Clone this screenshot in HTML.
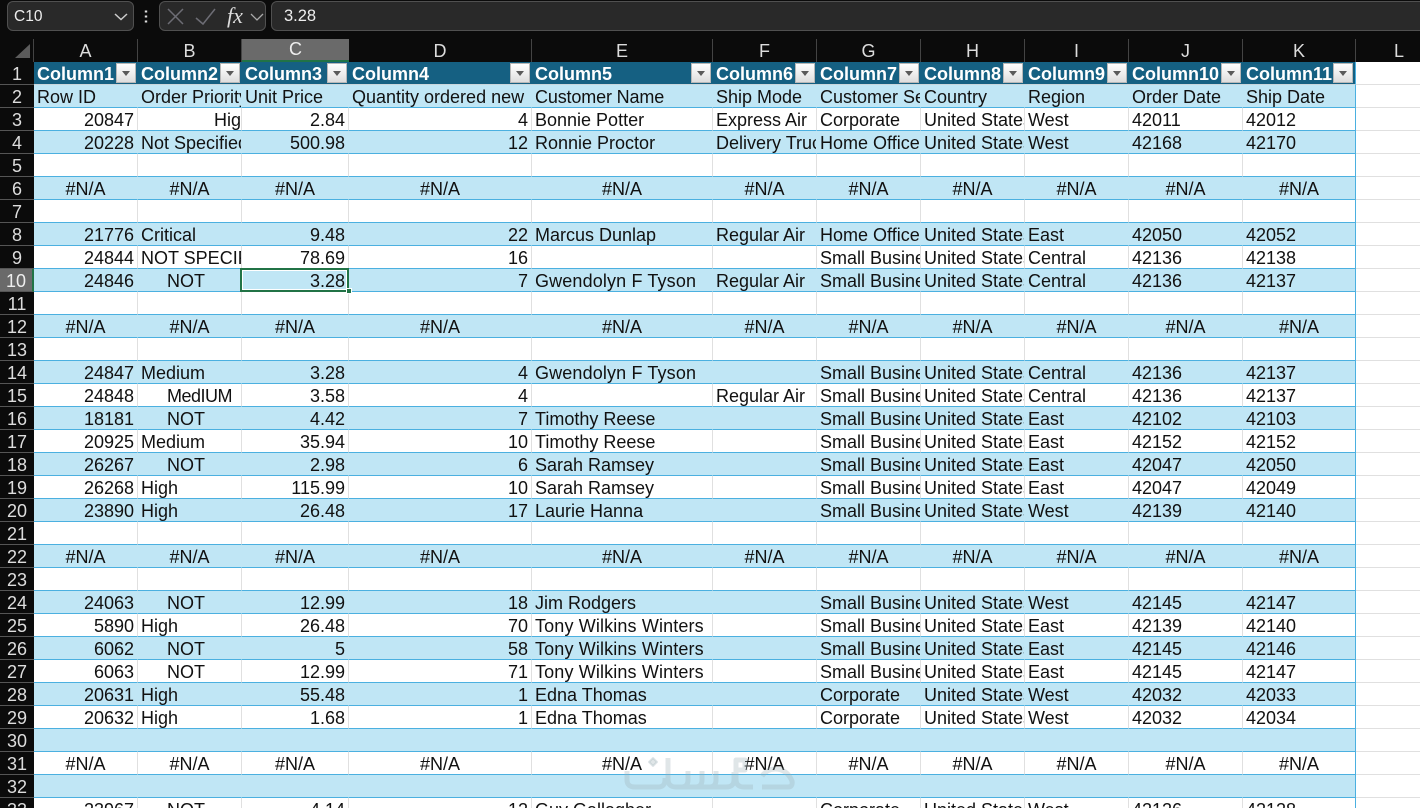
<!DOCTYPE html>
<html><head><meta charset="utf-8"><style>
html,body{margin:0;padding:0;width:1420px;height:808px;overflow:hidden;background:#0b0b0b;font-family:"Liberation Sans",sans-serif}
#wrap{position:relative;width:1420px;height:808px;overflow:hidden}
.box{position:absolute;box-sizing:border-box;background:#292929;border:1px solid #505050;border-radius:6px;color:#eee;font-size:16.5px;line-height:29px}
table{position:absolute;left:0;top:39px;border-collapse:separate;border-spacing:0;table-layout:fixed;width:1442px;font-size:18px;color:#111}
td,th{box-sizing:border-box;height:23px;padding:2px 3px 0 3px;overflow:hidden;white-space:nowrap;font-weight:400;line-height:20px;position:relative}
td{background:#fff;border-right:1px solid #e0e0e0;border-bottom:1px solid #4bb0e0;text-align:left}
tr.b td{background:#c0e6f5;border-right:1px solid #c0e6f5}
td.k{border-right:1px solid #4bb0e0!important}
td.l,tr.b td.l,tr.h td.l{background:#fff;border-right:0;border-bottom:1px solid #e0e0e0}
th{background:#0b0b0b;color:#ddd;text-align:center;padding:2px 0 0;border-bottom:1px solid #555;font-size:18px}
tr.c th{border-right:1px solid #444;border-bottom:0;padding:0;line-height:22px}
tr.c th:last-child{border-right:0}
tr.c th.s{background:#6a6a6a;color:#eee;border-bottom:2px solid #217346;border-right:0;line-height:21px}
th.s{background:#6a6a6a;color:#eee;border-right:2px solid #217346}
tr.h td{background:#156082;color:#fff;font-weight:700;border-right:0;border-bottom:1px solid #c9d6dc}
tr.h i{position:absolute;right:2px;top:1px;width:20px;height:20px;box-sizing:border-box;background:linear-gradient(#fff,#dedede);border:1px solid #b8b8b8}
tr.h i:after{content:"";position:absolute;left:5px;top:7px;border:4px solid transparent;border-top:5px solid #5a5a5a;border-bottom:0}
td.r{text-align:right}
td.m{text-align:center}
td.n{padding-left:29px}
td.o{padding-left:0;padding-right:0}
td.w{letter-spacing:.14px}
#sel{position:absolute;left:240px;top:268px;width:109px;height:24px;box-sizing:border-box;border:2px solid #217346;outline:1px solid #fff;outline-offset:-3px}
#hd{position:absolute;left:346px;top:288px;width:6px;height:6px;background:#217346;border:1px solid #fff;box-sizing:border-box}
svg{position:absolute;left:0;top:0}
</style></head><body><div id="wrap">
<div class="box" style="left:7px;top:1px;width:127px;height:30px;padding-left:6px;font-size:15.5px">C10</div>
<div class="box" style="left:159px;top:1px;width:107px;height:30px"></div>
<div class="box" style="left:271px;top:1px;width:1160px;height:30px;padding-left:12px">3.28</div>
<table>
<colgroup><col style="width:34px"><col style="width:104px"><col style="width:104px"><col style="width:107px"><col style="width:183px"><col style="width:181px"><col style="width:104px"><col style="width:104px"><col style="width:104px"><col style="width:104px"><col style="width:114px"><col style="width:113px"><col style="width:86px"></colgroup>
<tr class="c"><th></th><th>A</th><th>B</th><th class="s">C</th><th>D</th><th>E</th><th>F</th><th>G</th><th>H</th><th>I</th><th>J</th><th>K</th><th>L</th></tr>
<tr class="h"><th>1</th><td>Column1<i></i></td><td>Column2<i></i></td><td>Column3<i></i></td><td>Column4<i></i></td><td>Column5<i></i></td><td>Column6<i></i></td><td>Column7<i></i></td><td>Column8<i></i></td><td>Column9<i></i></td><td>Column10<i></i></td><td class="k">Column11<i></i></td><td class="l"></td></tr>
<tr class="b"><th>2</th><td>Row ID</td><td>Order Priority</td><td>Unit Price</td><td>Quantity ordered new</td><td style="letter-spacing:-.15px">Customer Name</td><td>Ship Mode</td><td>Customer Segment</td><td>Country</td><td>Region</td><td>Order Date</td><td class="k">Ship Date</td><td class="l"></td></tr>
<tr><th>3</th><td class="r">20847</td><td class="r o">Hig</td><td class="r">2.84</td><td class="r">4</td><td>Bonnie Potter</td><td>Express Air</td><td>Corporate</td><td>United States</td><td>West</td><td>42011</td><td class="k">42012</td><td class="l"></td></tr>
<tr class="b"><th>4</th><td class="r">20228</td><td>Not Specified</td><td class="r">500.98</td><td class="r">12</td><td>Ronnie Proctor</td><td>Delivery Truck</td><td>Home Office</td><td>United States</td><td>West</td><td>42168</td><td class="k">42170</td><td class="l"></td></tr>
<tr><th>5</th><td></td><td></td><td></td><td></td><td></td><td></td><td></td><td></td><td></td><td></td><td class="k"></td><td class="l"></td></tr>
<tr class="b"><th>6</th><td class="m">#N/A</td><td class="m">#N/A</td><td class="m">#N/A</td><td class="m">#N/A</td><td class="m">#N/A</td><td class="m">#N/A</td><td class="m">#N/A</td><td class="m">#N/A</td><td class="m">#N/A</td><td class="m">#N/A</td><td class="m k">#N/A</td><td class="l"></td></tr>
<tr><th>7</th><td></td><td></td><td></td><td></td><td></td><td></td><td></td><td></td><td></td><td></td><td class="k"></td><td class="l"></td></tr>
<tr class="b"><th>8</th><td class="r">21776</td><td>Critical</td><td class="r">9.48</td><td class="r">22</td><td>Marcus Dunlap</td><td>Regular Air</td><td>Home Office</td><td>United States</td><td>East</td><td>42050</td><td class="k">42052</td><td class="l"></td></tr>
<tr><th>9</th><td class="r">24844</td><td>NOT SPECIFIED</td><td class="r">78.69</td><td class="r">16</td><td></td><td></td><td>Small Business</td><td>United States</td><td>Central</td><td>42136</td><td class="k">42138</td><td class="l"></td></tr>
<tr class="b"><th class="s">10</th><td class="r">24846</td><td class="n">NOT</td><td class="r">3.28</td><td class="r">7</td><td class="w">Gwendolyn F Tyson</td><td>Regular Air</td><td>Small Business</td><td>United States</td><td>Central</td><td>42136</td><td class="k">42137</td><td class="l"></td></tr>
<tr><th>11</th><td></td><td></td><td></td><td></td><td></td><td></td><td></td><td></td><td></td><td></td><td class="k"></td><td class="l"></td></tr>
<tr class="b"><th>12</th><td class="m">#N/A</td><td class="m">#N/A</td><td class="m">#N/A</td><td class="m">#N/A</td><td class="m">#N/A</td><td class="m">#N/A</td><td class="m">#N/A</td><td class="m">#N/A</td><td class="m">#N/A</td><td class="m">#N/A</td><td class="m k">#N/A</td><td class="l"></td></tr>
<tr><th>13</th><td></td><td></td><td></td><td></td><td></td><td></td><td></td><td></td><td></td><td></td><td class="k"></td><td class="l"></td></tr>
<tr class="b"><th>14</th><td class="r">24847</td><td>Medium</td><td class="r">3.28</td><td class="r">4</td><td class="w">Gwendolyn F Tyson</td><td></td><td>Small Business</td><td>United States</td><td>Central</td><td>42136</td><td class="k">42137</td><td class="l"></td></tr>
<tr><th>15</th><td class="r">24848</td><td class="n" style="letter-spacing:-.5px">MedIUM</td><td class="r">3.58</td><td class="r">4</td><td></td><td>Regular Air</td><td>Small Business</td><td>United States</td><td>Central</td><td>42136</td><td class="k">42137</td><td class="l"></td></tr>
<tr class="b"><th>16</th><td class="r">18181</td><td class="n">NOT</td><td class="r">4.42</td><td class="r">7</td><td>Timothy Reese</td><td></td><td>Small Business</td><td>United States</td><td>East</td><td>42102</td><td class="k">42103</td><td class="l"></td></tr>
<tr><th>17</th><td class="r">20925</td><td>Medium</td><td class="r">35.94</td><td class="r">10</td><td>Timothy Reese</td><td></td><td>Small Business</td><td>United States</td><td>East</td><td>42152</td><td class="k">42152</td><td class="l"></td></tr>
<tr class="b"><th>18</th><td class="r">26267</td><td class="n">NOT</td><td class="r">2.98</td><td class="r">6</td><td>Sarah Ramsey</td><td></td><td>Small Business</td><td>United States</td><td>East</td><td>42047</td><td class="k">42050</td><td class="l"></td></tr>
<tr><th>19</th><td class="r">26268</td><td>High</td><td class="r">115.99</td><td class="r">10</td><td>Sarah Ramsey</td><td></td><td>Small Business</td><td>United States</td><td>East</td><td>42047</td><td class="k">42049</td><td class="l"></td></tr>
<tr class="b"><th>20</th><td class="r">23890</td><td>High</td><td class="r">26.48</td><td class="r">17</td><td>Laurie Hanna</td><td></td><td>Small Business</td><td>United States</td><td>West</td><td>42139</td><td class="k">42140</td><td class="l"></td></tr>
<tr><th>21</th><td></td><td></td><td></td><td></td><td></td><td></td><td></td><td></td><td></td><td></td><td class="k"></td><td class="l"></td></tr>
<tr class="b"><th>22</th><td class="m">#N/A</td><td class="m">#N/A</td><td class="m">#N/A</td><td class="m">#N/A</td><td class="m">#N/A</td><td class="m">#N/A</td><td class="m">#N/A</td><td class="m">#N/A</td><td class="m">#N/A</td><td class="m">#N/A</td><td class="m k">#N/A</td><td class="l"></td></tr>
<tr><th>23</th><td></td><td></td><td></td><td></td><td></td><td></td><td></td><td></td><td></td><td></td><td class="k"></td><td class="l"></td></tr>
<tr class="b"><th>24</th><td class="r">24063</td><td class="n">NOT</td><td class="r">12.99</td><td class="r">18</td><td>Jim Rodgers</td><td></td><td>Small Business</td><td>United States</td><td>West</td><td>42145</td><td class="k">42147</td><td class="l"></td></tr>
<tr><th>25</th><td class="r">5890</td><td>High</td><td class="r">26.48</td><td class="r">70</td><td class="w">Tony Wilkins Winters</td><td></td><td>Small Business</td><td>United States</td><td>East</td><td>42139</td><td class="k">42140</td><td class="l"></td></tr>
<tr class="b"><th>26</th><td class="r">6062</td><td class="n">NOT</td><td class="r">5</td><td class="r">58</td><td class="w">Tony Wilkins Winters</td><td></td><td>Small Business</td><td>United States</td><td>East</td><td>42145</td><td class="k">42146</td><td class="l"></td></tr>
<tr><th>27</th><td class="r">6063</td><td class="n">NOT</td><td class="r">12.99</td><td class="r">71</td><td class="w">Tony Wilkins Winters</td><td></td><td>Small Business</td><td>United States</td><td>East</td><td>42145</td><td class="k">42147</td><td class="l"></td></tr>
<tr class="b"><th>28</th><td class="r">20631</td><td>High</td><td class="r">55.48</td><td class="r">1</td><td>Edna Thomas</td><td></td><td>Corporate</td><td>United States</td><td>West</td><td>42032</td><td class="k">42033</td><td class="l"></td></tr>
<tr><th>29</th><td class="r">20632</td><td>High</td><td class="r">1.68</td><td class="r">1</td><td>Edna Thomas</td><td></td><td>Corporate</td><td>United States</td><td>West</td><td>42032</td><td class="k">42034</td><td class="l"></td></tr>
<tr class="b"><th>30</th><td></td><td></td><td></td><td></td><td></td><td></td><td></td><td></td><td></td><td></td><td class="k"></td><td class="l"></td></tr>
<tr><th>31</th><td class="m">#N/A</td><td class="m">#N/A</td><td class="m">#N/A</td><td class="m">#N/A</td><td class="m">#N/A</td><td class="m">#N/A</td><td class="m">#N/A</td><td class="m">#N/A</td><td class="m">#N/A</td><td class="m">#N/A</td><td class="m k">#N/A</td><td class="l"></td></tr>
<tr class="b"><th>32</th><td></td><td></td><td></td><td></td><td></td><td></td><td></td><td></td><td></td><td></td><td class="k"></td><td class="l"></td></tr>
<tr><th>33</th><td class="r">23967</td><td class="n">NOT</td><td class="r">4.14</td><td class="r">12</td><td>Guy Gallagher</td><td></td><td>Corporate</td><td>United States</td><td>West</td><td>42126</td><td class="k">42128</td><td class="l"></td></tr>
</table>
<div id="sel"></div><div id="hd"></div>
<svg width="1420" height="808" fill="none">
<path d="M146 10.5v2M146 15.5v2M146 20.5v2" stroke="#ddd" stroke-width="2.4"/>
<path d="M168 9l15 15M183 9l-15 15" stroke="#6d6d75" stroke-width="1.5"/>
<path d="M196 18l7 6 12-15" stroke="#6d6d75" stroke-width="1.5"/>
<text x="227" y="23" font-family="Liberation Serif,serif" font-style="italic" font-size="22" fill="#ddd">fx</text>
<path d="M251 14l6 6 6-6" stroke="#aaa" stroke-width="1.3"/>
<path d="M115 14l6 5.5 6-5.5" stroke="#ccc" stroke-width="1.5"/>
<path d="M30 44v14H15z" fill="#5c5c5c"/>
<g stroke="#9fb0b6" stroke-opacity=".32" stroke-width="5" stroke-linejoin="round">
<path d="M627 771v9q0 7 8 7h23q7 0 7-7v-2M668 758v21q0 8 8 8h50q8 0 8-7v-8M688 771v9q0 7-7 7M702 771v9q0 7-7 7M716 771v9q0 7-7 7M736 760h9v10h-9zM736 770v9q0 8 8 8h9M762 787h26q5 0 4-6-5-12-17-12-8 0-13 7"/>
<path d="M653 758l4 4-4 4-4-4z" fill="#9fb0b6" fill-opacity=".32" stroke-width="2"/>
</g>
</svg>
</div></body></html>
